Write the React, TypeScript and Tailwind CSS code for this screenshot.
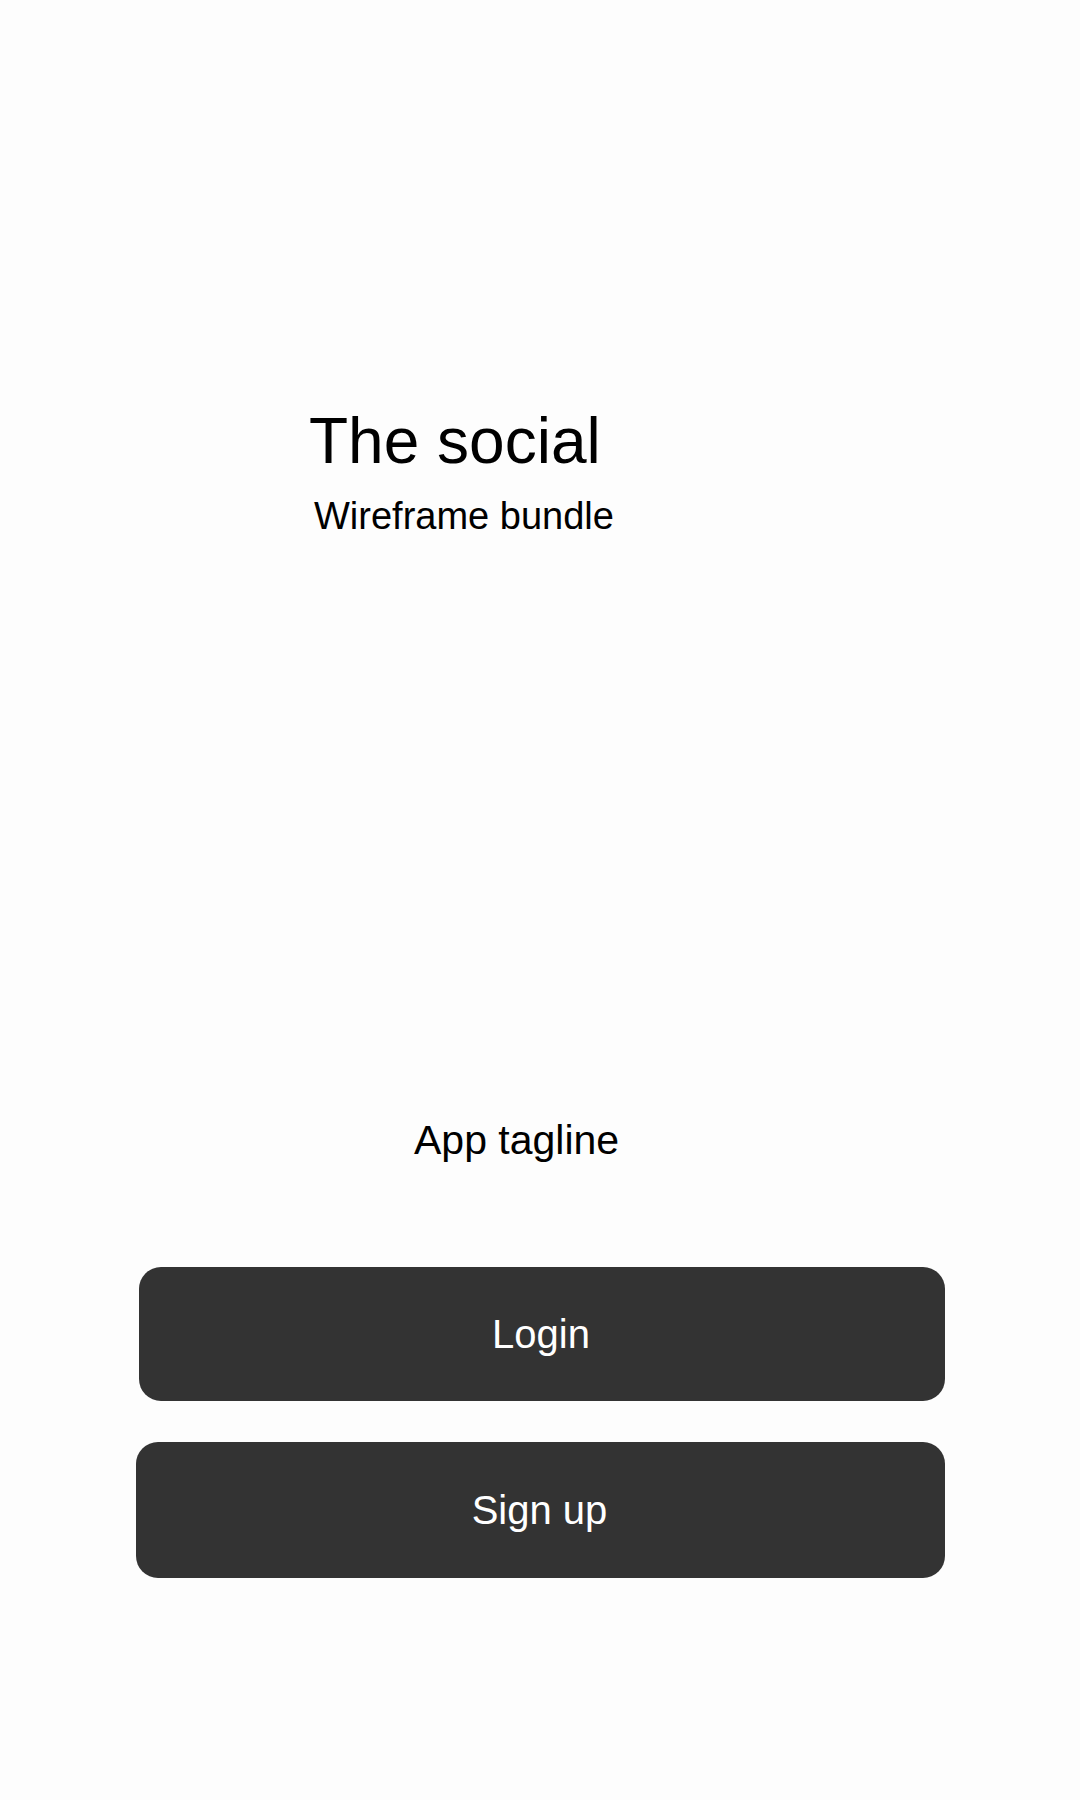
import React from "react";

export default function App() {
  return (
    <div className="min-h-[1800px] w-full bg-[#fdfdfd] text-black font-['Liberation_Sans',Arial,sans-serif] flex flex-col">
      <div className="pt-[409px] pl-[309px] flex flex-col items-start">
        <h1 className="text-[64px] leading-none font-normal">The social</h1>
        <p className="mt-[24px] ml-[5px] text-[38px] leading-none">Wireframe bundle</p>
      </div>
      <p className="mt-[585px] pl-[414px] text-[41px] leading-none">App tagline</p>
      <div className="mt-[106px] flex flex-col">
        <button className="ml-[139px] w-[806px] h-[134px] rounded-[22px] bg-[#333333] text-white text-[40px] leading-none flex items-center justify-center">
          <span className="-ml-[2px]">Login</span>
        </button>
        <button className="mt-[41px] ml-[136px] w-[809px] h-[136px] rounded-[22px] bg-[#333333] text-white text-[40px] leading-none flex items-center justify-center">
          <span className="-ml-[2px]">Sign up</span>
        </button>
      </div>
    </div>
  );
}
